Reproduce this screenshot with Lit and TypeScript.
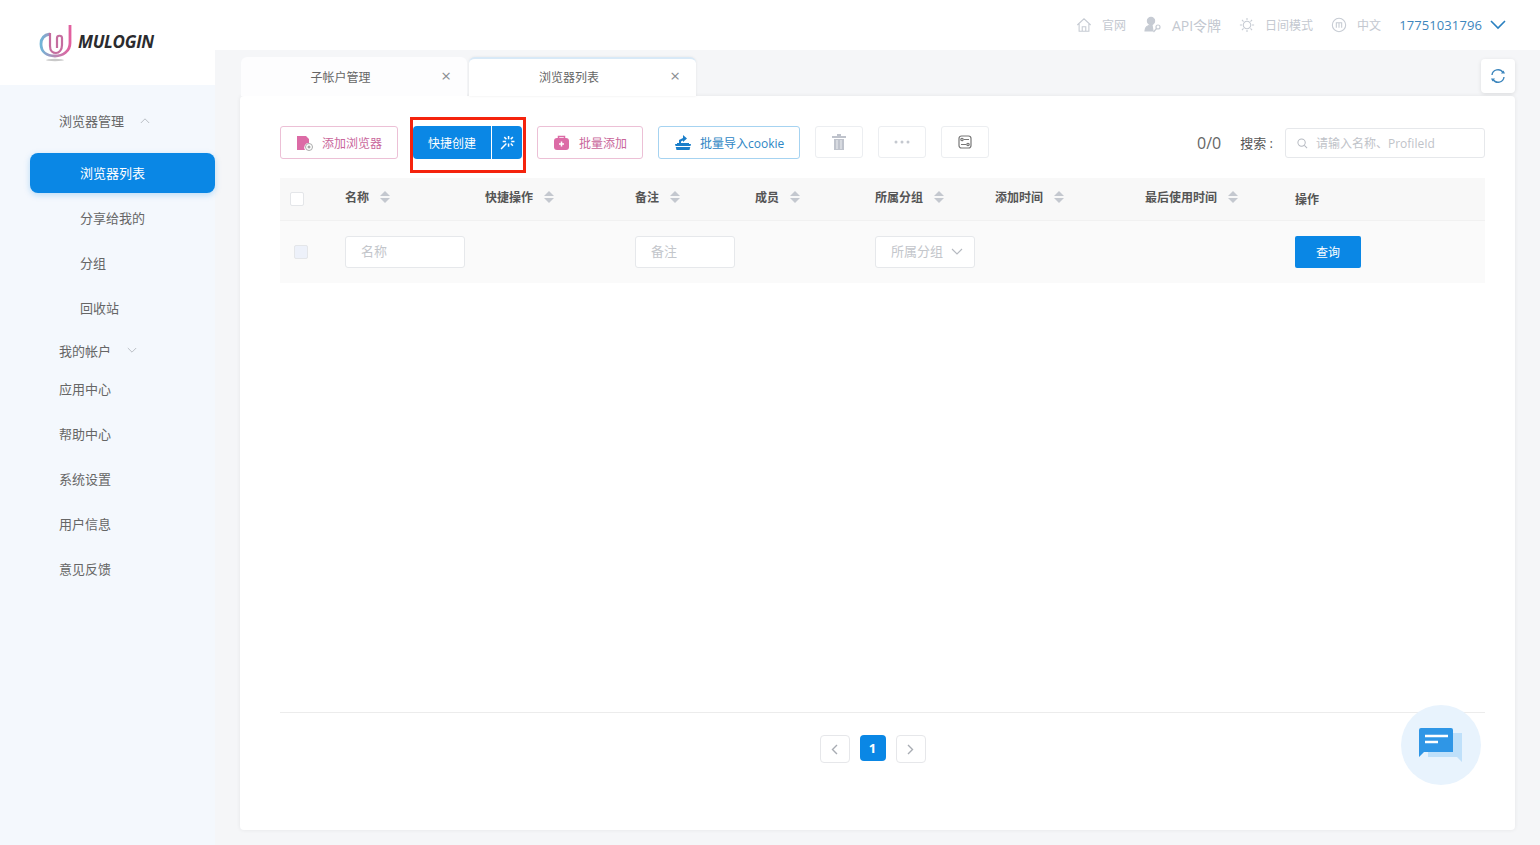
import { LitElement, html, css, svg } from 'lit';
import { customElement } from 'lit/decorators.js';

const chevronUp = html`<svg class="chev" viewBox="0 0 12 8"><path d="M1 7l5-5 5 5" /></svg>`;
const chevronDown = html`<svg class="chev" viewBox="0 0 12 8"><path d="M1 1l5 5 5-5" /></svg>`;

const sortIcon = html`<svg class="sort" viewBox="0 0 10 14">
  <path d="M5 1l5 5H0z" fill="#c4c8cf" /><path d="M5 13L0 8h10z" fill="#c4c8cf" />
</svg>`;

const logoIcon = svg`
  <defs>
    <linearGradient id="lg" x1="0" y1="0" x2="1" y2="0">
      <stop offset="0" stop-color="#6fb5d8" /><stop offset="0.45" stop-color="#b48bb5" /><stop offset="1" stop-color="#e2609f" />
    </linearGradient>
  </defs>
  <path d="M11 10C5 11 2 15 2 20c0 8 6 12 14 12s15-5 15-13V1" fill="none" stroke="url(#lg)" stroke-width="2.8" />
  <path d="M11 9v13c0 5 3 7 6 7s6-3 6-8V14c0-3-5-3-5 0v10" fill="none" stroke="#c56d9f" stroke-width="2.2" />
  <ellipse cx="16" cy="36" rx="9" ry="1.2" fill="#c9c9c9" />`;

@customElement('app-root')
export class AppRoot extends LitElement {
  static styles = css`
    :host {
      display: block;
      width: 1540px;
      height: 845px;
      overflow: hidden;
      position: relative;
      font-family: 'Open Sans', 'Noto Sans CJK SC', sans-serif;
      font-size: 12px;
      color: #555;
      background: #f5f6f8;
    }

    .page {
      display: flex;
      height: 100%;
    }

    .side {
      width: 215px;
      flex: none;
      display: flex;
      flex-direction: column;
      background: #f4f8fd;
    }

    .logo {
      height: 85px;
      background: #fff;
      flex: none;
      display: flex;
      align-items: flex-start;
      padding: 24px 0 0 39px;
      box-sizing: border-box;
      gap: 6px;
    }

    .logo svg {
      width: 33px;
      height: 38px;
      flex: none;
    }

    .logo span {
      font-family: 'Open Sans', sans-serif;
      font-size: 17px;
      line-height: 20px;
      font-weight: 700;
      font-style: italic;
      color: #2b2b2e;
      margin-top: 8px;
      letter-spacing: -0.3px;
    }

    .menu {
      display: flex;
      flex-direction: column;
      padding-left: 30px;
      padding-top: 13px;
      font-size: 13px;
      color: #666;
    }

    .menu-item {
      height: 45px;
      display: flex;
      align-items: center;
      padding-left: 29px;
      gap: 16px;
    }

    .menu-item.short {
      height: 32px;
      margin-top: 4px;
    }

    .first {
      margin-bottom: 10px;
    }

    .sub {
      height: 45px;
      display: flex;
      align-items: center;
      padding-left: 50px;
    }

    .sub.active {
      height: 40px;
      box-sizing: border-box;
      padding-bottom: 1px;
      margin-bottom: 2px;
      background: #0a87e5;
      color: #fff;
      border-radius: 8px;
      box-shadow: 0 2px 6px rgba(10, 135, 229, 0.25);
    }

    .chev {
      width: 10px;
      height: 7px;
      fill: none;
      stroke: #b5b9c0;
      stroke-width: 1.1;
    }

    .main {
      flex: 1;
      min-width: 0;
      display: flex;
      flex-direction: column;
    }

    .top {
      height: 50px;
      margin-left: -1px;
      background: #fff;
      display: flex;
      justify-content: flex-end;
      align-items: center;
      padding-right: 34px;
      flex: none;
      color: #c3c8d0;
    }

    .top-item {
      display: flex;
      align-items: center;
      gap: 10px;
      margin-right: 18px;
    }

    .top-item.big {
      font-size: 14px;
    }

    .top-item svg {
      width: 16px;
      height: 16px;
      fill: none;
      stroke: #c6cbd3;
      stroke-width: 1.2;
    }

    .top-item.big svg {
      width: 18px;
      height: 18px;
    }

    .user {
      display: flex;
      align-items: center;
      gap: 8px;
      color: #3d86bd;
      font-size: 13px;
      letter-spacing: 0.1px;
    }

    .user svg {
      width: 16px;
      height: 10px;
      fill: none;
      stroke: #2a80c0;
      stroke-width: 1.6;
    }

    .tabs {
      height: 46px;
      flex: none;
      display: flex;
      align-items: flex-end;
      padding: 0 25px 0 26px;
      gap: 2px;
    }

    .tab {
      width: 226px;
      height: 39px;
      box-sizing: border-box;
      position: relative;
      display: flex;
      align-items: center;
      justify-content: center;
      background: #fdfdfe;
      border-radius: 6px 6px 0 0;
      color: #666;
      padding-right: 27px;
    }

    .tab.on {
      width: 227px;
      background: #fff;
      border-top: 2px solid #d8e9f7;
      box-shadow: 0 0 3px rgba(0, 0, 0, 0.08);
      padding-bottom: 2px;
    }

    .tab i {
      position: absolute;
      right: 16px;
      top: 10px;
      font-style: normal;
      font-size: 17px;
      line-height: 17px;
      color: #8a8d92;
    }

    .tab.on i {
      top: 8px;
    }

    .refresh {
      margin-left: auto;
      align-self: flex-start;
      margin-top: 9px;
      width: 34px;
      height: 34px;
      background: #fff;
      border-radius: 4px;
      box-shadow: 0 1px 4px rgba(0, 0, 0, 0.1);
      display: flex;
      align-items: center;
      justify-content: center;
    }

    .refresh svg {
      width: 18px;
      height: 18px;
      fill: none;
      stroke: #3d86bd;
      stroke-width: 1.4;
    }

    .card {
      margin: 0 25px 15px;
      height: 734px;
      box-sizing: border-box;
      background: #fff;
      border-radius: 4px;
      box-shadow: 0 0 4px rgba(0, 0, 0, 0.07);
      padding: 30px 30px 0 40px;
      display: flex;
      flex-direction: column;
    }

    .tools {
      height: 33px;
      display: flex;
      align-items: flex-start;
      flex: none;
    }

    .btn {
      height: 33px;
      box-sizing: border-box;
      border: 1px solid #ecc0d6;
      border-radius: 3px;
      display: flex;
      align-items: center;
      color: #c9669b;
      background: #fff;
    }

    .btn svg {
      flex: none;
    }

    .add {
      width: 118px;
      padding-left: 15px;
      gap: 9px;
    }

    .add svg,
    .batch svg {
      width: 17px;
      height: 16px;
    }

    .quick {
      width: 109px;
      margin-left: 15px;
      border: none;
      background: #0a87e5;
      color: #fff;
      border-radius: 4px;
    }

    .quick b {
      font-weight: 400;
      width: 78px;
      text-align: center;
    }

    .quick span {
      flex: 1;
      height: 100%;
      border-left: 1px solid #fff;
      display: flex;
      align-items: center;
      justify-content: center;
    }

    .quick svg {
      width: 15px;
      height: 15px;
      stroke: #fff;
      stroke-width: 1.4;
    }

    .batch {
      width: 106px;
      margin-left: 15px;
      padding-left: 15px;
      gap: 9px;
    }

    .cookie {
      width: 142px;
      margin-left: 15px;
      padding-left: 15px;
      gap: 8px;
      border-color: #a6d3f1;
      color: #2e86c4;
    }

    .cookie svg {
      width: 18px;
      height: 16px;
    }

    .square {
      width: 48px;
      height: 32px;
      margin-left: 15px;
      justify-content: center;
      border-color: #eceef1;
    }

    .count {
      margin-left: auto;
      display: flex;
      align-items: center;
      height: 33px;
      font-size: 16px;
      color: #666;
    }

    .count span {
      font-size: 13px;
      margin-left: 19px;
      margin-right: 12px;
      color: #555;
    }

    .search {
      width: 200px;
      height: 30px;
      box-sizing: border-box;
      margin-top: 1px;
      border: 1px solid #e6e8eb;
      border-radius: 3px;
      display: flex;
      align-items: center;
      padding-left: 11px;
      gap: 8px;
      color: #bfc3c9;
      font-size: 12px;
    }

    .search svg {
      width: 11px;
      height: 11px;
      fill: none;
      stroke: #b5b9c0;
      stroke-width: 1.1;
    }

    .head,
    .filter {
      display: grid;
      grid-template-columns: 65px 140px 150px 120px 120px 120px 150px 150px 1fr;
      align-items: center;
      background: #f8f8f8;
    }

    .head {
      height: 43px;
      margin-top: 19px;
      font-weight: 700;
      color: #555;
      border-bottom: 1px solid #f1f1f1;
      box-sizing: border-box;
    }

    .head > div {
      display: flex;
      align-items: center;
      gap: 11px;
      margin-top: -4px;
    }

    .head > div.op,
    .head > div.tick {
      margin-top: 0;
    }

    .sort {
      width: 10px;
      height: 14px;
    }

    .filter {
      height: 62px;
      padding-bottom: 1px;
      box-sizing: border-box;
      background: #fafafa;
    }

    .check {
      width: 14px;
      height: 14px;
      box-sizing: border-box;
      border: 1px solid #e4e6e9;
      background: #fff;
      border-radius: 2px;
      margin-left: 10px;
    }

    .check.off {
      margin-left: 14px;
      background: #edf1fa;
    }

    .field {
      height: 32px;
      box-sizing: border-box;
      background: #fff;
      border: 1px solid #e6e8eb;
      border-radius: 3px;
      display: flex;
      align-items: center;
      padding: 0 0 2px 15px;
      color: #c3c6cb;
      font-size: 13px;
    }

    .w120 {
      width: 120px;
    }

    .w100 {
      width: 100px;
    }

    .pick {
      gap: 8px;
    }

    .pick .chev {
      width: 12px;
      height: 8px;
      margin-top: 2px;
    }

    .query {
      width: 66px;
      height: 32px;
      background: #0a87e5;
      color: #fff;
      border-radius: 2px;
      display: flex;
      align-items: center;
      justify-content: center;
    }

    .pager {
      margin-top: auto;
      height: 118px;
      box-sizing: border-box;
      border-top: 1px solid #ececec;
      padding: 22px 20px 0 0;
      display: flex;
      justify-content: center;
      align-items: flex-start;
      gap: 10px;
    }

    .page-btn {
      width: 30px;
      height: 28px;
      box-sizing: border-box;
      border: 1px solid #e6e7ea;
      border-radius: 4px;
      display: flex;
      align-items: center;
      justify-content: center;
    }

    .page-btn svg {
      width: 7px;
      height: 11px;
      fill: none;
      stroke: #a8acb3;
      stroke-width: 1.4;
    }

    .page-btn.cur {
      width: 26px;
      height: 26px;
      background: #0a87e5;
      border: none;
      color: #fff;
      font-weight: 700;
      font-size: 13px;
    }

    .chat {
      position: absolute;
      left: 1401px;
      top: 705px;
      width: 80px;
      height: 80px;
      border-radius: 50%;
      background: #e8f3fd;
      display: flex;
      align-items: center;
      justify-content: center;
    }

    .chat svg {
      width: 44px;
      height: 36px;
      margin-top: 1px;
    }

    .mark {
      position: absolute;
      left: 410px;
      top: 117px;
      width: 116px;
      height: 56px;
      box-sizing: border-box;
      border: 3px solid #f5230d;
    }
  `;

  render() {
    return html`
      <div class="page">
        <aside class="side">
          <div class="logo">
            <svg viewBox="0 0 33 38">${logoIcon}</svg>
            <span>MULOGIN</span>
          </div>
          <nav class="menu">
            <div class="menu-item first">浏览器管理 ${chevronUp}</div>
            <div class="sub active">浏览器列表</div>
            <div class="sub">分享给我的</div>
            <div class="sub">分组</div>
            <div class="sub">回收站</div>
            <div class="menu-item short">我的帐户 ${chevronDown}</div>
            <div class="menu-item">应用中心</div>
            <div class="menu-item">帮助中心</div>
            <div class="menu-item">系统设置</div>
            <div class="menu-item">用户信息</div>
            <div class="menu-item">意见反馈</div>
          </nav>
        </aside>

        <main class="main">
          <header class="top">
            <div class="top-item">
              <svg viewBox="0 0 18 18"><path d="M1.5 9L9 2l7.5 7M3.5 8v8h11V8M7 16v-5h4v5" /></svg>官网
            </div>
            <div class="top-item big">
              <svg viewBox="0 0 18 18">
                <circle cx="7" cy="5" r="3.6" fill="#c6cbd3" />
                <path d="M1 15c0-4 3-6 7-6l1 6z" fill="#c6cbd3" />
                <circle cx="14" cy="11" r="2" /><path d="M12.5 12.5L9.5 16" />
              </svg>API令牌
            </div>
            <div class="top-item">
              <svg viewBox="0 0 18 18">
                <circle cx="9" cy="9" r="4.2" />
                <path d="M9 1v2.5M9 14.500V17M1 9h2.500M14.500 9H17M3.300 3.300l1.800 1.800M12.900 12.900l1.800 1.800M3.300 14.700l1.800-1.800M12.900 5.100l1.800-1.800" />
              </svg>日间模式
            </div>
            <div class="top-item">
              <svg viewBox="0 0 18 18">
                <circle cx="9" cy="9" r="7.500" />
                <path d="M6 12V6.500h6V12M9 6.500V12" />
              </svg>中文
            </div>
            <div class="user">
              17751031796
              <svg viewBox="0 0 16 10"><path d="M1 1l7 7 7-7" /></svg>
            </div>
          </header>

          <div class="tabs">
            <div class="tab">子帐户管理<i>×</i></div>
            <div class="tab on">浏览器列表<i>×</i></div>
            <div class="refresh">
              <svg viewBox="0 0 18 18">
                <path d="M3 8a6 6 0 0 1 11-2.500M15 10a6 6 0 0 1-11 2.500" />
                <path d="M12 6.500h4l-1.500-3zM6 11.500H2l1.500 3z" fill="#3d86bd" stroke="none" />
              </svg>
            </div>
          </div>

          <section class="card">
            <div class="tools">
              <div class="btn add">
                <svg viewBox="0 0 17 16">
                  <path d="M1 1h9l3 3v4a4.500 4.500 0 0 0-4 7H1z" fill="#dc6ba6" />
                  <circle cx="13" cy="12" r="3.500" fill="#fff" stroke="#aaa" />
                  <path d="M11.500 12h3M13 10.500v3" stroke="#888" />
                </svg>
                添加浏览器
              </div>
              <div class="btn quick">
                <b>快捷创建</b>
                <span>
                  <svg viewBox="0 0 14 14">
                    <path d="M1 13l5-5M8 1v3M8 8v3M2.500 6h3M10.500 6h3M4 2l2 2M10 8l2 2M10 4l2-2" />
                  </svg>
                </span>
              </div>
              <div class="btn batch">
                <svg viewBox="0 0 17 16">
                  <path d="M5.500 3V1.500h6V3" fill="none" stroke="#dc6ba6" stroke-width="1.500" />
                  <rect x="1" y="3" width="15" height="12" rx="3" fill="#dc6ba6" />
                  <path d="M6 9h5M8.500 6.500v5" stroke="#fff" stroke-width="1.500" />
                </svg>
                批量添加
              </div>
              <div class="btn cookie">
                <svg viewBox="0 0 18 16">
                  <path d="M5 8V5l4-2V0l4 3.500L9 7V5.500L7 6.500V8z" fill="#1b7ec9" />
                  <path d="M1 9h16l-1.500 6h-13z" fill="#1b7ec9" />
                  <path d="M3 8.500h12" stroke="#1b7ec9" />
                  <path d="M1 11.500h16" stroke="#fff" />
                </svg>
                批量导入cookie
              </div>
              <div class="btn square">
                <svg width="14" height="16" viewBox="0 0 14 16">
                  <path d="M0 2h14v2H0zM5 0h4v2H5z" fill="#bfc3cc" />
                  <path d="M2 5h10v11H2z" fill="#bfc3cc" />
                  <path d="M5 6v9M9 6v9" stroke="#eef0f3" />
                </svg>
              </div>
              <div class="btn square">
                <svg width="16" height="4" viewBox="0 0 16 4">
                  <circle cx="2" cy="2" r="1.500" fill="#c4c8cf" />
                  <circle cx="8" cy="2" r="1.500" fill="#c4c8cf" />
                  <circle cx="14" cy="2" r="1.500" fill="#c4c8cf" />
                </svg>
              </div>
              <div class="btn square">
                <svg width="14" height="14" viewBox="0 0 14 14" fill="none" stroke="#777" stroke-width="1.200">
                  <rect x="1" y="1" width="12" height="12" rx="2.500" />
                  <path d="M6 4.500h5M3 9.500h5" />
                  <circle cx="4" cy="4.500" r="1.200" /><circle cx="10" cy="9.500" r="1.200" />
                </svg>
              </div>
              <div class="count">
                0/0<span>搜索 :</span>
                <div class="search">
                  <svg viewBox="0 0 12 12"><circle cx="5" cy="5" r="4" /><path d="M8 8l3 3" /></svg>
                  请输入名称、ProfileId
                </div>
              </div>
            </div>

            <div class="head">
              <div class="tick"><span class="check"></span></div>
              <div>名称 ${sortIcon}</div>
              <div>快捷操作 ${sortIcon}</div>
              <div>备注 ${sortIcon}</div>
              <div>成员 ${sortIcon}</div>
              <div>所属分组 ${sortIcon}</div>
              <div>添加时间 ${sortIcon}</div>
              <div>最后使用时间 ${sortIcon}</div>
              <div class="op">操作</div>
            </div>

            <div class="filter">
              <div><div class="check off"></div></div>
              <div><div class="field w120">名称</div></div>
              <div></div>
              <div><div class="field w100">备注</div></div>
              <div></div>
              <div><div class="field w100 pick">所属分组 ${chevronDown}</div></div>
              <div></div>
              <div></div>
              <div><div class="query">查询</div></div>
            </div>

            <div class="pager">
              <div class="page-btn"><svg viewBox="0 0 7 11"><path d="M6 1L1.500 5.500 6 10" /></svg></div>
              <div class="page-btn cur">1</div>
              <div class="page-btn"><svg viewBox="0 0 7 11"><path d="M1 1l4.500 4.500L1 10" /></svg></div>
            </div>
          </section>
        </main>
      </div>

      <div class="chat">
        <svg viewBox="0 0 44 36">
          <path d="M9 5h34v29l-5-5H9z" fill="#bfe0fa" />
          <path d="M0 2a2 2 0 0 1 2-2h30a2 2 0 0 1 2 2v22H5l-5 5z" fill="#2f96e6" />
          <path d="M6 8h23M6 14h13" stroke="#fff" stroke-width="2.400" />
        </svg>
      </div>
      <div class="mark"></div>
    `;
  }
}
